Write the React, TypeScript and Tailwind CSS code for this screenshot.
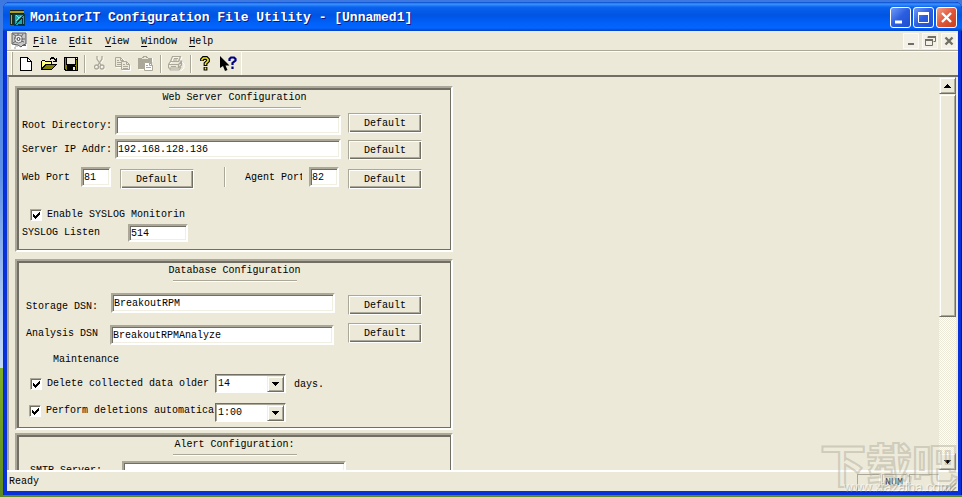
import type { ReactNode } from "react";

const SUNKEN =
  "border-2 border-t-[#aca899] border-l-[#aca899] border-r-white border-b-white bg-white shadow-[inset_1px_1px_0_#716f64,inset_-1px_-1px_0_#f1efe2]";
const RAISED =
  "border border-t-[#f1efe2] border-l-[#f1efe2] border-r-[#716f64] border-b-[#716f64] bg-[#ece9d8] shadow-[inset_1px_1px_0_#ffffff,inset_-1px_-1px_0_#aca899]";

function DefaultButton({ className = "" }: { className?: string }) {
  return (
    <button
      className={`h-5 w-[74px] shrink-0 border border-t-[#aca899] border-l-[#aca899] border-r-white border-b-white bg-[#ece9d8] pt-[2px] text-center leading-4 shadow-[inset_1px_1px_0_#ffffff,inset_-1px_-1px_0_#716f64,inset_-2px_-2px_0_#aca899] ${className}`}
    >
      Default
    </button>
  );
}

function Field({ id, value, className }: { id: string; value: string; className: string }) {
  return (
    <input
      id={id}
      defaultValue={value}
      className={`shrink-0 pl-px outline-none ${SUNKEN} ${className}`}
    />
  );
}

function Panel({ title, rule, children }: { title: string; rule: string; children: ReactNode }) {
  return (
    <section className="w-[438px] border-2 border-t-[#aca899] border-l-[#aca899] border-r-white border-b-white">
      <div className="border-t-2 border-r border-b border-l-2 border-[#716f64]">
        <h2 className="text-center leading-4">{title}</h2>
        <div className={`mx-auto mt-px border-t border-b border-t-[#aca899] border-b-white ${rule}`} />
        {children}
      </div>
    </section>
  );
}

function Check({ id, children }: { id: string; children: ReactNode }) {
  return (
    <div className="flex items-center gap-[5px]">
      <span className="grid size-3 shrink-0">
        <input
          id={id}
          type="checkbox"
          defaultChecked
          className="peer col-start-1 row-start-1 size-3 appearance-none border border-t-[#aca899] border-l-[#aca899] border-r-white border-b-white bg-white shadow-[inset_1px_1px_0_#716f64]"
        />
        <svg
          viewBox="0 0 12 12"
          className="pointer-events-none invisible col-start-1 row-start-1 size-3 peer-checked:visible"
          shapeRendering="crispEdges"
        >
          <path d="M3 5h1v1h1v1h1v-1h1v-1h1v-1h1v-1h1v3h-1v1h-1v1h-1v1h-1v1h-1v-1h-1v-1h-1z" fill="#000" />
        </svg>
      </span>
      <label htmlFor={id} className="whitespace-nowrap">
        {children}
      </label>
    </div>
  );
}

function Combo({ id, label, options }: { id: string; label: string; options: string[] }) {
  return (
    <div className="relative w-[71px] shrink-0">
      <select
        id={id}
        aria-label={label}
        className="block h-[19px] w-full appearance-none border border-t-[#716f64] border-l-[#716f64] border-r-white border-b-white bg-white pl-[2px] leading-4 shadow-[inset_1px_1px_0_#aca899] outline-none"
      >
        {options.map((o) => (
          <option key={o}>{o}</option>
        ))}
      </select>
      <span
        className={`pointer-events-none absolute top-[2px] right-[2px] flex h-4 w-[17px] items-center justify-center ${RAISED}`}
      >
        <Arrow />
      </span>
    </div>
  );
}

function Arrow({ up = false }: { up?: boolean }) {
  return (
    <svg width="7" height="4" viewBox="0 0 7 4" className={up ? "rotate-180" : ""} shapeRendering="crispEdges">
      <path d="M0 0h7v1h-1v1h-1v1h-1v1h-1v-1h-1v-1h-1v-1h-1z" fill="#000" />
    </svg>
  );
}

function AppIcon() {
  return (
    <svg width="15" height="16" viewBox="0 0 15 16" shapeRendering="crispEdges">
      <path d="M0 0h14v4h-14z" fill="#a8a020" />
      <path d="M0 0h14v1h-14zM0 3h14v1h-14z" fill="#1c2010" />
      <path d="M0 4h4v11h-4z" fill="#20301c" />
      <path d="M1 5h1v9h-1z" fill="#b8a828" />
      <path d="M4 4h11v12h-11z" fill="#063c48" />
      <path d="M5 5h9v10h-9z" fill="#20a8a8" />
      <path d="M5 15l9-10M12 8v7M8 14h6" stroke="#032b38" fill="none" />
      <path d="M6 5l3 3M6 11l5-5" stroke="#70ece4" fill="none" />
    </svg>
  );
}

function DocIcon() {
  return (
    <svg width="16" height="17" viewBox="0 0 16 17">
      <path d="M0 0h16v17h-16z" fill="#fff" />
      <path d="M1 1h14v11l-3 1-2 2-3-2-6-1z" fill="#c8c8c8" stroke="#555" />
      <circle cx="7.5" cy="7" r="4" fill="#eee" stroke="#777" />
      <circle cx="7.5" cy="7" r="1.5" fill="none" stroke="#444" />
      <path d="M2 2l3 2M12 2l-2 3M2 11l3-2M13 10l-3-1M3 6h2M10 7h4M7 1v3" stroke="#666" />
      <path d="M12 13h3v1h-3z" fill="#208080" />
      <path d="M4 14h3M3 16h2" stroke="#999" />
    </svg>
  );
}

function NewIcon() {
  return (
    <svg width="12" height="14" viewBox="0 0 12 14" shapeRendering="crispEdges">
      <path d="M0 0h8v1h1v1h1v1h1v1h1v10h-12z" fill="#000" />
      <path d="M1 1h6v4h4v8h-10zM8 2h1v1h1v1h-2z" fill="#fff" />
    </svg>
  );
}

function OpenIcon() {
  return (
    <svg width="16" height="13" viewBox="0 0 16 13" shapeRendering="crispEdges">
      <path d="M9 1h1v-1h3v1h1v1h1v-1h1v4h-4v-1h2v-1h-1v-1h-3v1h-1z" fill="#000" />
      <path d="M0 4h1v-1h3v1h7v3h5v1h-1v1h-1v1h-1v1h-1v1h-1v1h-11z" fill="#000" />
      <path d="M1 4h3v1h6v2h-6v1h-1v1h-1v1h-1z" fill="#ffff80" />
      <path d="M5 8h9v1h-1v1h-1v1h-1v1h-9v-1h1v-1h1v-1h1z" fill="#808000" />
    </svg>
  );
}

function SaveIcon() {
  return (
    <svg width="14" height="14" viewBox="0 0 14 14" shapeRendering="crispEdges">
      <path d="M0 0h14v14h-13v-1h-1z" fill="#000" />
      <path d="M1 1h1v7h1v1h8v-1h1v-5h1v10h-1v-4h-9v4h-1v-1h-1z" fill="#808000" />
      <path d="M3 1h8v6h-8z" fill="#ece9d8" />
      <path d="M12 1h1v1h-1zM9 10h2v3h-2z" fill="#ece9d8" />
    </svg>
  );
}

function CutIcon() {
  return (
    <svg width="12" height="15" viewBox="0 0 12 15">
      <g fill="none" stroke="#fff" transform="translate(1 1)">
        <path d="M3 0v3l4 6M8 0v3l-4 6" />
        <circle cx="2.5" cy="11" r="2" />
        <circle cx="8" cy="11" r="2" />
      </g>
      <g fill="none" stroke="#aca899" strokeWidth="1.3">
        <path d="M3 0v3l4 6M8 0v3l-4 6" />
        <circle cx="2.5" cy="11" r="2" />
        <circle cx="8" cy="11" r="2" />
      </g>
    </svg>
  );
}

function CopyIcon() {
  return (
    <svg width="16" height="14" viewBox="0 0 16 14">
      <path d="M1.500 1.500h6l2 2v7h-8zM7.500 5.500h5l3 3v5h-8z" fill="#ece9d8" stroke="#fff" />
      <path
        d="M.5 .5h5l3 3v6h-8zM5.500 .5v3h3M2 3.500h2M2 5.500h5M2 7.500h4"
        fill="#ece9d8"
        stroke="#aca899"
      />
      <path
        d="M6.500 4.500h5l3 3v5h-8zM11.500 4.500v3h3M8 7.500h2M8 9.500h5M8 11.500h5"
        fill="#ece9d8"
        stroke="#aca899"
      />
    </svg>
  );
}

function PasteIcon() {
  return (
    <svg width="16" height="15" viewBox="0 0 16 15">
      <path d="M1 2h14v4h-1v9h-8v-1h-5z" fill="#fff" />
      <path d="M0 2h4v-1h1v-1h4v1h1v1h4v11h-14z" fill="#aca899" />
      <path d="M4 3h6v-1h-2v-1h-2v1h-2z" fill="#ece9d8" />
      <path d="M6.500 6.500h5l3 3v5h-8z" fill="#fff" stroke="#aca899" />
      <path d="M8 9.500h2M8 11.500h5M11.500 7v2.500h3" stroke="#aca899" fill="none" />
    </svg>
  );
}

function PrintIcon() {
  return (
    <svg width="17" height="15" viewBox="0 0 17 15">
      <path d="M5 1h9l-2 5h2l2 2v4l-3 3h-11l-1-2v-4l3-3z" fill="#ece9d8" stroke="#fff" />
      <path
        d="M4.500 .5h8l-2 5h-8zM6 2.500h4M5 4h4M2.500 5.500l-2 3v3.500h10l3-3v-4h-2M.5 8.500h10v3M10.500 8.500l3-3M2 12v2h9l2-3M3 10.500h5"
        fill="none"
        stroke="#aca899"
        strokeWidth="1.200"
      />
    </svg>
  );
}

function HelpIcon() {
  return (
    <svg width="10" height="15" viewBox="0 0 10 15" fill="none">
      <path d="M2 5v-1.500l1.500-1.500h3l1.500 1.500v1.500l-2.500 2.500v2.500M5.500 11v3.500" stroke="#000" strokeWidth="3.800" />
      <path d="M2 4.500v-1l1.500-1.500h3l1.500 1.500v1.500l-2.500 2.500v1.500M5.500 11.500v2" stroke="#f4e820" strokeWidth="1.600" />
    </svg>
  );
}

function ContextHelpIcon() {
  return (
    <svg width="17" height="15" viewBox="0 0 17 15">
      <path d="M0 0v12l3-2 2 5 2.500-1-2-4.500h4z" fill="#000" />
      <path
        d="M9.500 5v-2l1.500-1.500h3l1.500 1.500v1.500l-3 2.500v2M12.500 10.500v2.500"
        fill="none"
        stroke="#000080"
        strokeWidth="2.200"
      />
    </svg>
  );
}

function Tool({ label, width, children }: { label: string; width: string; children: ReactNode }) {
  return (
    <button aria-label={label} className={`flex h-[22px] shrink-0 items-center justify-center ${width}`}>
      {children}
    </button>
  );
}

function ToolSeparator() {
  return <span className="mx-[2px] h-[18px] w-[2px] border-r border-l border-r-white border-l-[#aca899]" />;
}

function CaptionButton({ label, tone, children }: { label: string; tone: string; children: ReactNode }) {
  return (
    <button aria-label={label} className={`size-[21px] rounded-[3px] border border-white ${tone}`}>
      <svg viewBox="0 0 19 19" className="size-full" fill="none" stroke="#fff">
        {children}
      </svg>
    </button>
  );
}

function ChildButton({ label, children }: { label: string; children: ReactNode }) {
  return (
    <button aria-label={label} className="size-4 border border-[#fbfaf5] bg-[#f3f1e7]">
      <svg viewBox="0 0 14 14" className="size-full" fill="none" stroke="#716f64">
        {children}
      </svg>
    </button>
  );
}

const MENUS = ["File", "Edit", "View", "Window", "Help"];

export default function App() {
  return (
    <div className="relative flex h-screen w-full overflow-hidden bg-[linear-gradient(#3c78e0_0%,#5c8fe8_35%,#a9c6f4_60%,#c4daf8_74%,#7fae2a_74%,#5d8a22_100%)] pt-[2px] pb-[2px] pl-[3px] font-['Liberation_Mono','Noto_Sans_CJK_SC',monospace] text-[10px] leading-3 text-black">
      <div className="flex min-w-0 flex-1 flex-col rounded-t-[7px] bg-[#0831d9] shadow-[inset_1px_0_0_#0a2fb0,inset_-1px_0_0_#001d9c]">
        <header className="flex h-[29px] shrink-0 items-center rounded-t-[7px] bg-[linear-gradient(#0847c8_0%,#3b93ff_7%,#0a62ee_18%,#0054e3_45%,#0062fa_75%,#0364ff_90%,#0040c0_100%)] pt-[2px] pr-[5px] pl-[7px]">
          <AppIcon />
          <h1 className="ml-[5px] flex-1 text-[13px] leading-4 font-bold whitespace-nowrap text-white [text-shadow:1px_1px_0_#0a1883]">
            MonitorIT Configuration File Utility - [Unnamed1]
          </h1>
          <div className="flex gap-[2px]">
            <CaptionButton label="Minimize" tone="bg-[linear-gradient(135deg,#6f9bf5,#2a5de0_50%,#1f4fd0)]">
              <path d="M4 14h7" strokeWidth="3" />
            </CaptionButton>
            <CaptionButton label="Maximize" tone="bg-[linear-gradient(135deg,#6f9bf5,#2a5de0_50%,#1f4fd0)]">
              <path d="M4.500 5v9.500h10v-9.500" />
              <path d="M4 5.500h11" strokeWidth="3" />
            </CaptionButton>
            <CaptionButton label="Close" tone="bg-[linear-gradient(135deg,#f0a088,#e0563a_50%,#c8401c)]">
              <path d="M5 5l9 9M14 5l-9 9" strokeWidth="2.400" />
            </CaptionButton>
          </div>
        </header>

        <div className="mr-1 mb-1 ml-1 flex min-h-0 flex-1 flex-col bg-[#ece9d8]">
          <nav className="flex h-5 shrink-0 items-center border-b border-[#aca899] bg-[#ece9d8] pr-px pl-1">
            <DocIcon />
            <div className="ml-[6px] flex flex-1 gap-3 pt-[2px]">
              {MENUS.map((m) => (
                <button key={m} className="leading-3">
                  <span className="underline underline-offset-2">{m[0]}</span>
                  {m.slice(1)}
                </button>
              ))}
            </div>
            <div className="flex gap-[3px]">
              <ChildButton label="Minimize document">
                <path d="M4 10h6" strokeWidth="2" />
              </ChildButton>
              <ChildButton label="Restore document">
                <path d="M5 4V2.500h7.500v5h-2M2.500 6v5.500h7V6" />
                <path d="M2 6h8M5 3h8" strokeWidth="2" />
              </ChildButton>
              <ChildButton label="Close document">
                <path d="M3.500 3.500l7 7M10.500 3.500l-7 7" strokeWidth="2.400" />
              </ChildButton>
            </div>
          </nav>

          <div className="flex h-6 shrink-0 items-center border-t border-white pl-1">
            <div className="flex h-full items-center border-r border-l border-white pr-px pl-[2px] shadow-[inset_1px_0_0_#aca899]">
              <Tool label="New" width="w-6"><NewIcon /></Tool>
              <Tool label="Open" width="w-[22px]"><OpenIcon /></Tool>
              <Tool label="Save" width="w-[22px]"><SaveIcon /></Tool>
              <ToolSeparator />
              <Tool label="Cut" width="w-6"><CutIcon /></Tool>
              <Tool label="Copy" width="w-[22px]"><CopyIcon /></Tool>
              <Tool label="Paste" width="w-6"><PasteIcon /></Tool>
              <ToolSeparator />
              <Tool label="Print" width="w-6"><PrintIcon /></Tool>
              <ToolSeparator />
              <Tool label="About" width="w-[22px]"><HelpIcon /></Tool>
              <Tool label="Context help" width="w-6"><ContextHelpIcon /></Tool>
            </div>
          </div>

          <main className="flex min-h-0 flex-1 border-t-2 border-l-2 border-t-[#716f64] border-l-[#aca899] pr-[2px]">
            <div className="flex min-w-0 flex-1 flex-col gap-[7px] overflow-hidden pt-[9px] pl-[6px]">
              <div className="h-[166px] shrink-0">
                <Panel title="Web Server Configuration" rule="w-[132px]">
                  <div className="mt-1 flex flex-col pb-[7px] pl-[3px]">
                    <div className="flex h-[22px] items-end">
                      <label htmlFor="root" className="w-[93px] pb-[3px]">Root Directory:</label>
                      <Field id="root" value="" className="h-5 w-[226px]" />
                      <DefaultButton className="ml-[7px] self-start" />
                    </div>
                    <div className="mt-1 flex h-[21px] items-start">
                      <label htmlFor="ip" className="w-[93px] pt-[5px]">Server IP Addr:</label>
                      <Field id="ip" value="192.168.128.136" className="h-5 w-[226px]" />
                      <DefaultButton className="ml-[7px] self-end" />
                    </div>
                    <div className="mt-[7px] flex h-[22px] items-start">
                      <label htmlFor="web" className="w-[59px] pt-[5px]">Web Port</label>
                      <Field id="web" value="81" className="h-5 w-[30px]" />
                      <DefaultButton className="ml-[9px] self-end" />
                      <span className="ml-[30px] h-5 w-[2px] border-r border-l border-r-white border-l-[#aca899]" />
                      <label htmlFor="agent" className="ml-[19px] w-[57px] overflow-hidden pt-[5px] whitespace-nowrap">
                        Agent Port
                      </label>
                      <Field id="agent" value="82" className="ml-[7px] h-5 w-[30px]" />
                      <DefaultButton className="ml-[9px] self-end" />
                    </div>
                    <div className="mt-5 pl-2">
                      <Check id="syslog">Enable SYSLOG Monitorin</Check>
                    </div>
                    <div className="mt-[3px] flex">
                      <label htmlFor="listen" className="w-[106px] pt-[3px]">SYSLOG Listen</label>
                      <Field id="listen" value="514" className="h-[18px] w-[60px]" />
                    </div>
                  </div>
                </Panel>
              </div>

              <div className="shrink-0">
                <Panel title="Database Configuration" rule="w-[124px]">
                  <div className="mt-[11px] flex flex-col pb-[5px] pl-[7px]">
                    <div className="flex h-[22px] items-start">
                      <label htmlFor="storage" className="w-[85px] pt-2">Storage DSN:</label>
                      <Field id="storage" value="BreakoutRPM" className="h-5 w-[224px]" />
                      <DefaultButton className="ml-[13px] self-end" />
                    </div>
                    <div className="mt-2 flex h-[22px] items-end">
                      <label htmlFor="analysis" className="w-[84px] pb-[5px]">Analysis DSN</label>
                      <Field id="analysis" value="BreakoutRPMAnalyze" className="h-5 w-[224px]" />
                      <DefaultButton className="ml-[14px] self-start" />
                    </div>
                    <h3 className="mt-[9px] pl-[27px]">Maintenance</h3>
                    <div className="mt-2 flex items-center pl-[4px]">
                      <div className="w-[185px]">
                        <Check id="older">Delete collected data older</Check>
                      </div>
                      <Combo id="days" label="Days to keep" options={["14", "30"]} />
                      <label htmlFor="days" className="ml-2 pt-[2px]">days.</label>
                    </div>
                    <div className="mt-[10px] flex items-start pl-[3px]">
                      <div className="w-[186px] pt-[2px]">
                        <Check id="auto">Perform deletions automatica</Check>
                      </div>
                      <Combo id="time" label="Time of deletion" options={["1:00", "2:00"]} />
                    </div>
                  </div>
                </Panel>
              </div>

              <div className="-mt-1 shrink-0">
                <Panel title="Alert Configuration:" rule="w-[124px]">
                  <div className="mt-[5px] flex pb-2 pl-[11px]">
                    <label htmlFor="smtp" className="w-[92px] pt-1">SMTP Server:</label>
                    <Field id="smtp" value="" className="h-5 w-[224px]" />
                  </div>
                </Panel>
              </div>
            </div>

            <div className="flex w-[17px] shrink-0 flex-col bg-[repeating-conic-gradient(#ffffff_0_25%,#ece9d8_0_50%)] bg-size-[2px_2px]">
              <button aria-label="Scroll up" className={`flex h-[17px] shrink-0 items-center justify-center ${RAISED}`}>
                <Arrow up />
              </button>
              <div className={`h-[223px] shrink-0 ${RAISED}`} />
              <button
                aria-label="Scroll down"
                className={`mt-auto flex h-[17px] shrink-0 items-center justify-center ${RAISED}`}
              >
                <Arrow />
              </button>
            </div>
          </main>

          <footer className="flex h-[21px] shrink-0 items-end border-t-2 border-white pr-px pl-[2px]">
            <p className="flex-1 self-center pt-px">Ready</p>
            <div className="flex h-[17px] gap-[2px]">
              <span className="w-[23px] border border-t-[#aca899] border-l-[#aca899] border-r-white border-b-white" />
              <span className="w-[25px] border border-t-[#aca899] border-l-[#aca899] border-r-white border-b-white pl-[2px] leading-4">
                NUM
              </span>
              <span className="w-[30px] border border-t-[#aca899] border-l-[#aca899] border-r-white border-b-white" />
            </div>
            <svg width="18" height="14" viewBox="0 0 18 14">
              <path d="M4 14l13-13M8 14l9-9M12 14l5-5" stroke="#fff" />
              <path d="M5 14l12-12M9 14l8-8M13 14l4-4" stroke="#aca899" strokeWidth="1.500" />
            </svg>
          </footer>
        </div>
      </div>

      <div className="pointer-events-none absolute right-1 bottom-1 text-center font-['Noto_Sans_CJK_SC',sans-serif] whitespace-nowrap">
        <p className="text-[46px] leading-[46px] font-bold text-[#f4f1e4]/30 [-webkit-text-stroke:2px_rgba(160,156,140,0.4)]">
          下载吧
        </p>
        <p className="-mt-1 pl-4 font-['Liberation_Sans',sans-serif] text-[13px] leading-3 text-[#fbfaf4]/60 [text-shadow:1px_1px_0_rgba(140,136,120,0.45)]">
          www.xiazaiba.com
        </p>
      </div>
    </div>
  );
}
